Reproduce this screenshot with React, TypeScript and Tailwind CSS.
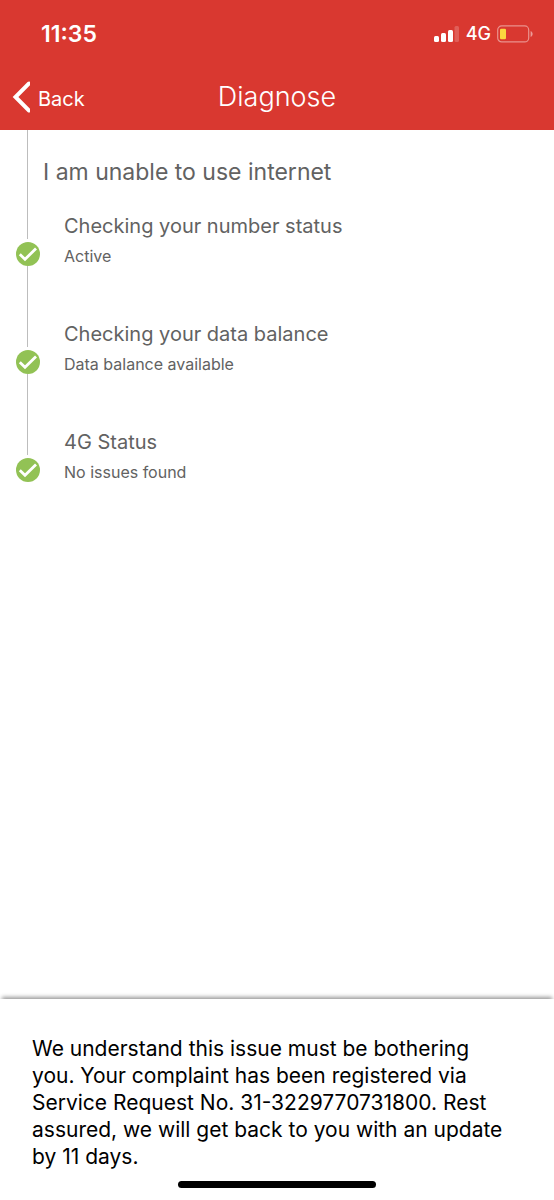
interface Step {
    title: string;
    result: string;
}

const steps: Step[] = [
    { title: 'Checking your number status', result: 'Active' },
    { title: 'Checking your data balance', result: 'Data balance available' },
    { title: '4G Status', result: 'No issues found' },
];

const SignalIcon = () => (
    <svg viewBox="0 0 26 16" className="w-[26px] h-4" fill="#fff" aria-hidden="true">
        <rect x="1" y="10" width="5" height="6" rx="1.5" />
        <rect x="8" y="7" width="5" height="9" rx="1.5" />
        <rect x="15" y="4" width="5" height="12" rx="1.5" />
        <rect x="21.5" y="0" width="4.500" height="16" rx="1.5" opacity="0.2" />
    </svg>
);

const BatteryIcon = () => (
    <svg viewBox="0 0 36 18" className="w-9 h-[18px]" aria-hidden="true">
        <rect x="0.7" y="0.9" width="31" height="16" rx="4" fill="none" stroke="#fff" strokeWidth="1.2" opacity="0.45" />
        <rect x="3" y="3.700" width="6" height="10.600" rx="1.3" fill="#fbd63f" />
        <path d="M33.6 6v6c1.2-.5 2-1.700 2-3s-.8-2.500-2-3z" fill="#fff" opacity="0.5" />
    </svg>
);

const BackIcon = () => (
    <svg viewBox="0 0 18 32" className="w-[18px] h-8" aria-hidden="true">
        <path d="M17 2.500 3.500 16 17 29.500" fill="none" stroke="#fff" strokeWidth="4" strokeLinecap="round" strokeLinejoin="miter" />
    </svg>
);

const CheckIcon = () => (
    <svg viewBox="0 0 24 24" className="w-6 h-6 shrink-0" aria-hidden="true">
        <circle cx="12" cy="12" r="12" fill="#92c255" />
        <path d="M3.800 12.300 9 17.300 20 6.500" fill="none" stroke="#fff" strokeWidth="2.800" />
    </svg>
);

export default function App() {
    return (
        <div className="min-h-screen flex flex-col bg-white text-[#626262] font-[Inter,sans-serif]">
            <header className="bg-[#d93830] text-white">
                {/* Status bar */}
                <div className="h-[68px] pl-[41px] pr-[21px] flex items-center justify-between">
                    <span className="text-[23px] leading-7 font-semibold">11:35</span>
                    <div className="flex items-center">
                        <SignalIcon />
                        <span className="ml-[7px] mr-[6px] text-lg font-medium">4G</span>
                        <BatteryIcon />
                    </div>
                </div>

                {/* Navigation bar */}
                <div className="h-[62px] pb-1 px-3 grid grid-cols-[1fr_auto_1fr] items-center">
                    <button type="button" className="flex items-center gap-2 justify-self-start text-xl">
                        <BackIcon />
                        <span className="pt-1">Back</span>
                    </button>
                    <h1 className="text-[27px] leading-8 font-light">Diagnose</h1>
                </div>
            </header>

            <main className="flex-1 px-4">
                <div className="flex">
                    <div className="w-6 shrink-0 flex justify-center">
                        <div className="w-px mr-px bg-[#bdbdbd]" />
                    </div>
                    <h2 className="pl-[3px] pt-7 pb-3 text-[23px] leading-7">I am unable to use internet</h2>
                </div>
                <ol>
                    {steps.map((step) => (
                        <li key={step.title} className="group flex gap-6">
                            <div className="w-6 shrink-0 flex flex-col items-center gap-[3px]">
                                <div className="w-px mr-px flex-1 bg-[#bdbdbd]" />
                                <CheckIcon />
                            </div>
                            <div className="pt-[54px] group-first:pt-3.5 flex flex-col gap-1.5">
                                <h3 className="text-xl leading-7">{step.title}</h3>
                                <p className="text-base leading-5">{step.result}</p>
                            </div>
                        </li>
                    ))}
                </ol>
            </main>

            <footer className="pl-8 pr-[46px] pt-9 bg-white text-black shadow-[0_-4px_4px_-2px_rgba(0,0,0,0.4)]">
                <p className="text-[21px] leading-[27px]">
                    We understand this issue must be bothering you. Your complaint has been registered via Service
                    Request No. 31-3229770731800. Rest assured, we will get back to you with an update by 11 days.
                </p>
            </footer>
            <div className="pt-[11px] pb-3 bg-white">
                <div className="mx-auto w-[198px] h-[7px] rounded-full bg-black" />
            </div>
        </div>
    );
}
